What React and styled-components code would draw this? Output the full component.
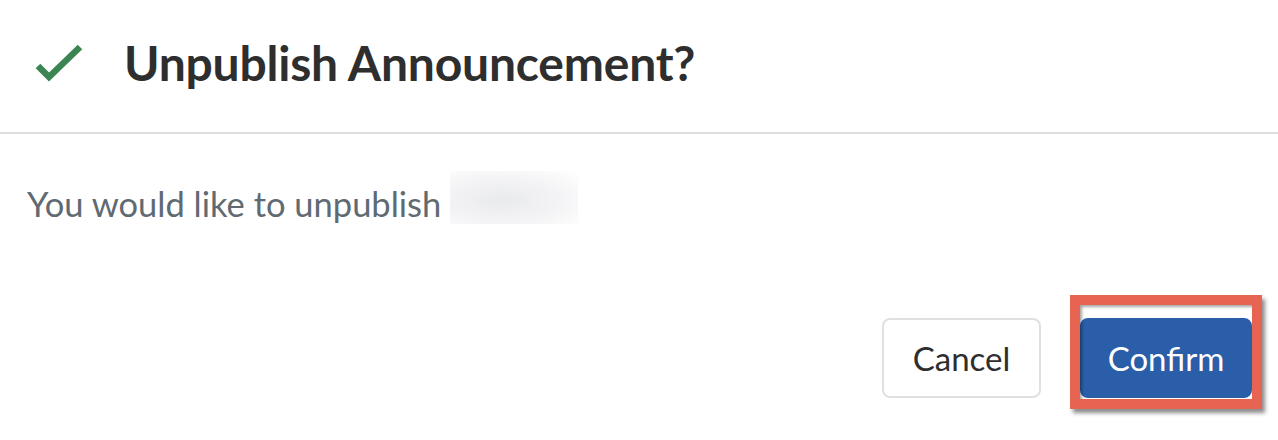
import React from 'react'
import styled, { createGlobalStyle } from 'styled-components'

const GlobalStyle = createGlobalStyle`
    html, body {
        margin: 0;
        padding: 0;
        background: #fff;
    }
    body {
        font-family: Lato, "Open Sans", sans-serif;
    }
`

export default function App() {
    return (
        <>
            <GlobalStyle />
            <Dialog>
                <Header>
                    <CheckIcon viewBox="0 0 50 40" aria-hidden="true">
                        <path d="M3 22 L14 33 L45 3" />
                    </CheckIcon>
                    <Title>Unpublish Announcement?</Title>
                </Header>
                <Body>
                    <Message>You would like to unpublish</Message>
                    <Redacted />
                </Body>
                <Footer>
                    <Button $width={159}>Cancel</Button>
                    <Highlight>
                        <Button $primary $width={172}>Confirm</Button>
                    </Highlight>
                </Footer>
            </Dialog>
        </>
    )
}

const Dialog = styled.div`
    width: 1278px;
    height: 440px;
    background: #fff;
    display: flex;
    flex-direction: column;
`
const Header = styled.div`
    height: 134px;
    display: flex;
    align-items: center;
    padding-left: 35px;
    padding-bottom: 8px;
    border-bottom: 2px solid #dedede;
    box-sizing: border-box;
    gap: 39px;
`
const CheckIcon = styled.svg`
    width: 50px;
    height: 40px;
    margin-top: 4px;
    > path {
        fill: none;
        stroke: #3b8552;
        stroke-width: 6.5;
        stroke-linecap: butt;
        stroke-linejoin: miter;
    }
`
const Title = styled.h1`
    margin: 0;
    font-size: 48px;
    font-weight: 700;
    color: #2e2e2e;
    letter-spacing: -0.2px;
`
const Body = styled.div`
    display: flex;
    align-items: center;
    padding: 43px 0 0 27px;
    gap: 9px;
`
const Message = styled.p`
    margin: 0;
    font-size: 34.5px;
    color: #5f6a72;
`
const Redacted = styled.span`
    width: 128px;
    height: 53px;
    margin: -6px 0 6px 0;
    background: radial-gradient(ellipse at 40% 55%, #e9eaed 0%, #f4f4f6 55%, #ffffff 100%);
`
const Footer = styled.div`
    display: flex;
    justify-content: flex-end;
    align-items: center;
    gap: 39px;
    padding: 88px 26px 0 0;
`
const Highlight = styled.div`
    position: relative;
    display: flex;
    &::after {
        content: '';
        position: absolute;
        left: -10px;
        right: -10px;
        top: -23px;
        bottom: -11px;
        border: 10px solid #e86452;
        box-shadow: 3px 4px 4px rgba(0, 0, 0, 0.45), inset 2px 2px 3px rgba(0, 0, 0, 0.35);
        pointer-events: none;
    }
`
const Button = styled.button`
    width: ${(p) => p.$width}px;
    height: 80px;
    padding: 0;
    font-family: Lato, "Open Sans", sans-serif;
    font-size: 33px;
    border-radius: 8px;
    cursor: pointer;
    color: ${(p) => (p.$primary ? '#fff' : '#2e2e2e')};
    background: ${(p) => (p.$primary ? '#2a5ea8' : '#fff')};
    border: 2px solid ${(p) => (p.$primary ? '#2a5ea8' : '#dfe1e1')};
`
